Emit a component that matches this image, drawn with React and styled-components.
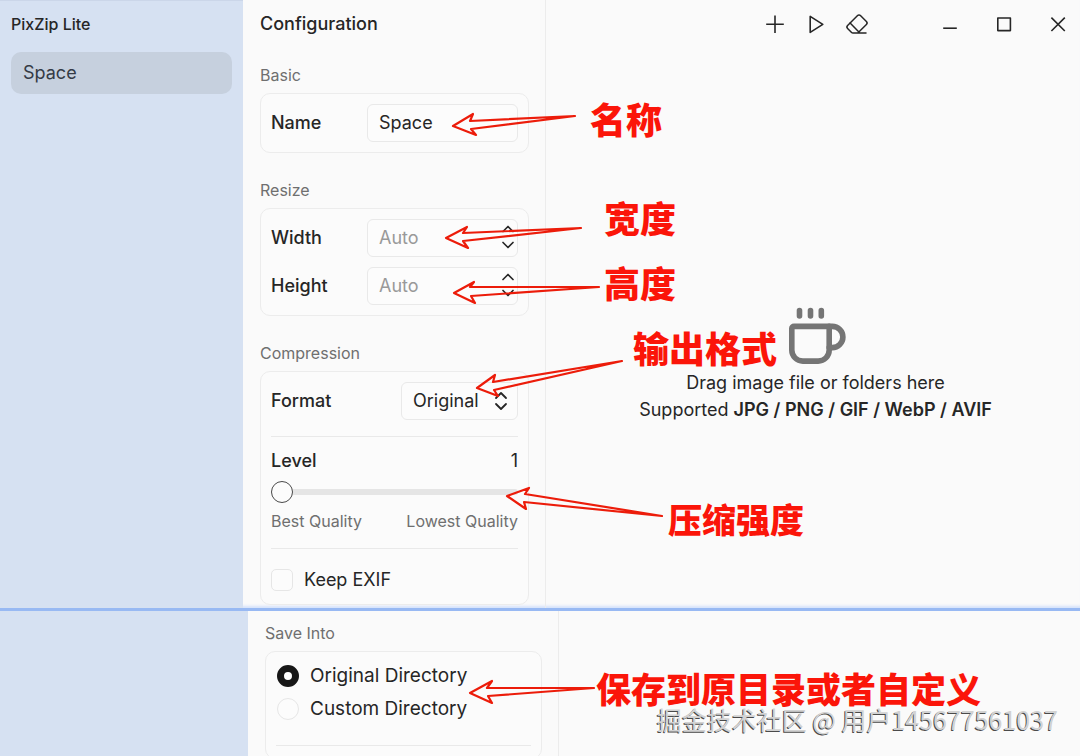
import React, { useState } from "react";
import styled, { createGlobalStyle } from "styled-components";
import { ChevronDown, ChevronUp, Eraser } from "lucide-react";

const GlobalStyle = createGlobalStyle`
    * {
        box-sizing: border-box;
    }

    body {
        margin: 0;
        background: #fafafa;
        color: #262626;
        font-family: Inter, "Noto Sans CJK SC", sans-serif;
        font-size: 18px;
        line-height: 24px;
    }

    button, input, select {
        font: inherit;
        color: inherit;
    }
`;

const Page = styled.div`
    position: relative;
    display: flex;
    flex-direction: column;
    height: 100vh;
    overflow: hidden;
`;

const WindowPane = styled.section`
    display: flex;
    flex: ${props => (props.$last ? "1 1 0" : "none")};
    min-height: 0;
    border-bottom: ${props => (props.$last ? "none" : "3px solid #98b9f3")};
    box-shadow: ${props => (props.$last ? "none" : "inset 0 -4px 3px -2px #d3e1fb")};
`;

const Sidebar = styled.aside`
    flex: none;
    width: ${props => (props.$wide ? 248 : 243)}px;
    padding: 0 11px;
    background: #d6e1f2;
    border-top: ${props => (props.$wide ? "none" : "1px solid #cbd6e9")};
`;

const AppName = styled.h1`
    margin: 0;
    padding: 11px 0 16px;
    font-size: 16px;
    font-weight: 500;
    line-height: 24px;
`;

const SpaceItem = styled.button`
    display: block;
    width: 100%;
    height: 42px;
    padding: 0 12px;
    border: 0;
    border-radius: 10px;
    background: #c6d0de;
    color: #343b46;
    text-align: left;
`;

const ConfigPanel = styled.div`
    flex: none;
    width: ${props => (props.$wide ? 311 : 303)}px;
    padding: 0 16px 3px 17px;
    border-right: 1px solid #ececec;
`;

const PanelTitle = styled.h2`
    margin: 0 0 17px;
    padding: 12px 0;
    font-size: 18px;
    font-weight: 500;
    line-height: 24px;
`;

const Group = styled.section`
    margin-bottom: ${props => (props.$last ? 0 : 27)}px;
    padding-top: ${props => (props.$spaced ? 12 : 0)}px;
`;

const GroupTitle = styled.h3`
    margin: 0 0 8px;
    color: #6f6f6f;
    font-size: 16px;
    font-weight: 400;
    line-height: 20px;
`;

const Card = styled.div`
    display: flex;
    flex-direction: column;
    gap: 10px;
    padding: 10px;
    border: 1px solid #ececec;
    border-radius: 10px;
    background: #fbfbfb;
`;

const Row = styled.div`
    display: flex;
    align-items: center;
    justify-content: space-between;
`;

const RowLabel = styled.label`
    font-weight: 500;
`;

const Field = styled.div`
    display: flex;
    width: 151px;
    height: 38px;
    border: 1px solid #e9e9e9;
    border-radius: 6px;
    background: #fcfcfc;
`;

const FieldInput = styled.input`
    flex: 1;
    min-width: 0;
    padding: 0 11px;
    border: 0;
    outline: 0;
    background: transparent;
    appearance: textfield;

    &::placeholder {
        color: #999;
        opacity: 1;
    }

    &::-webkit-inner-spin-button {
        appearance: none;
        margin: 0;
    }
`;

const Stepper = styled.div`
    display: flex;
    flex-direction: column;
    width: 18px;
    padding: 1px 0 3px;
`;

const StepButton = styled.button`
    display: flex;
    flex: 1;
    align-items: center;
    justify-content: center;
    min-height: 0;
    padding: 0;
    border: 0;
    background: transparent;

    svg {
        flex: none;
    }
`;

const SelectBox = styled.div`
    position: relative;
    width: 117px;
    height: 38px;
`;

const FormatSelect = styled.select`
    width: 100%;
    height: 100%;
    padding: 0 11px;
    border: 1px solid #e9e9e9;
    border-radius: 6px;
    background: #fcfcfc;
    appearance: none;
`;

const SelectArrows = styled.svg`
    position: absolute;
    top: 9px;
    right: 10px;
    pointer-events: none;
`;

const Divider = styled.hr`
    width: 100%;
    margin: 6px 0 2px;
    border: 0;
    border-top: 1px solid #e9e9e9;
`;

const LevelControl = styled.div`
    display: flex;
    flex-direction: column;
    gap: 8px;
    padding-bottom: 1px;
`;

const Slider = styled.input`
    width: 100%;
    height: 22px;
    margin: 0;
    appearance: none;
    background: transparent;

    &::-webkit-slider-runnable-track {
        height: 6px;
        border-radius: 3px;
        background: #e5e5e5;
    }

    &::-webkit-slider-thumb {
        width: 22px;
        height: 22px;
        margin-top: -8px;
        border: 1px solid #4a4a4a;
        border-radius: 50%;
        background: #fcfcfc;
        appearance: none;
    }
`;

const Scale = styled.div`
    display: flex;
    justify-content: space-between;
    color: #6f6f6f;
    font-size: 16px;
    line-height: 20px;
`;

const CheckLabel = styled.label`
    display: flex;
    align-items: center;
    gap: 11px;
    padding: ${props => (props.$padded ? "7px 0 2px" : "0")};
`;

const CheckBox = styled.input`
    width: 22px;
    height: 22px;
    margin: 0;
    border: 1px solid #e6e6e6;
    border-radius: 5px;
    background: #fcfcfc;
    appearance: none;

    &:checked {
        background: #171717;
    }
`;

const RadioList = styled.div`
    display: flex;
    flex-direction: column;
    gap: 9px;
    padding: 2px 1px 8px;
    font-size: 19px;
`;

const Radio = styled(CheckBox)`
    border-radius: 50%;

    &:checked {
        border: 7px solid #171717;
        background: #fff;
    }
`;

const Main = styled.main`
    display: flex;
    flex: 1;
    flex-direction: column;
    min-width: 0;
`;

const TitleBar = styled.header`
    display: flex;
    align-items: center;
    justify-content: flex-end;
    gap: 61px;
    height: 48px;
    padding-right: 6px;
`;

const ButtonSet = styled.div`
    display: flex;
    gap: ${props => props.$gap}px;
`;

const IconButton = styled.button`
    display: flex;
    align-items: center;
    justify-content: center;
    width: 32px;
    height: 32px;
    padding: 0;
    border: 0;
    background: transparent;
    color: #262626;
`;

const DropArea = styled.div`
    display: flex;
    flex: 1;
    flex-direction: column;
    align-items: center;
    padding: 259px 0 0 5px;
    text-align: center;
    line-height: 27px;
`;

const DropText = styled.p`
    margin: 0;

    &:first-of-type {
        margin-top: 5px;
    }
`;

const Formats = styled.strong`
    font-weight: 600;
`;

const Arrows = styled.svg`
    position: absolute;
    top: 0;
    left: 0;
    pointer-events: none;
`;

const Note = styled.span`
    position: absolute;
    top: ${props => props.$top}px;
    left: ${props => props.$left}px;
    color: #fb1509;
    font-family: "Noto Sans CJK SC", sans-serif;
    font-size: ${props => props.$size || 36}px;
    font-weight: 900;
    line-height: 36px;
    white-space: nowrap;
    pointer-events: none;
`;

const Watermark = styled.span`
    position: absolute;
    right: 22px;
    bottom: 19px;
    color: #d2d2d2;
    font-family: "Noto Sans CJK SC", sans-serif;
    font-size: 25px;
    line-height: 36px;
    white-space: nowrap;
    text-shadow: -1px 1px 0 #4a4a4a;
    pointer-events: none;
`;

const notes = [
    { text: "名称", left: 590, top: 100 },
    { text: "宽度", left: 604, top: 199 },
    { text: "高度", left: 604, top: 264 },
    { text: "输出格式", left: 633, top: 329 },
    { text: "压缩强度", left: 668, top: 501, size: 34 },
    { text: "保存到原目录或者自定义", left: 596, top: 670, size: 35 },
];

// each arrow runs tip, upper barb, tail, lower barb
const arrows = [
    "M453 126 473 114 470 121 575 116 471 129 476 135Z",
    "M446 238 467 227 463 233 581 228 463 241 468 248Z",
    "M454 293 474 282 470 287 599 287 471 296 475 303Z",
    "M477 388 495 375 493 382 622 361 494 390 498 396Z",
    "M507 496 529 488 525 494 662 516 524 502 526 509Z",
    "M470 693 492 681 487 688 594 688 488 696 492 703Z",
];

function Glyph({ d }) {
    return (
        <svg width="24" height="24" viewBox="0 0 24 24" fill="none" stroke="currentColor" strokeWidth="1.6" strokeLinejoin="round">
            <path d={d} />
        </svg>
    );
}

function CupIcon() {
    return (
        <svg width="61" height="57" viewBox="-4 0 61 57" fill="none" stroke="#757575" strokeWidth="5.6" strokeLinecap="round" strokeLinejoin="round">
            <path d="M10.5 3.5v5.5M21.5 3.5v5.5M32.3 3.5v5.5" />
            <path d="M5 19.4h35.2v23.7a11 11 0 0 1-11 11H13.8a11 11 0 0 1-11-11V21.6A2.2 2.2 0 0 1 5 19.4Z" />
            <path d="M40.2 19.4h3.1a10.6 10.6 0 0 1 0 21.2h-3.1" />
        </svg>
    );
}

function SizeField({ id, label }) {
    const [value, setValue] = useState("");
    const step = amount => setValue(String(Math.max(0, Number(value) + amount)));

    return (
        <Row>
            <RowLabel htmlFor={id}>{label}</RowLabel>
            <Field>
                <FieldInput id={id} type="number" placeholder="Auto" value={value} onChange={e => setValue(e.target.value)} />
                <Stepper>
                    <StepButton type="button" aria-label={`Increase ${label}`} onClick={() => step(1)}>
                        <ChevronUp size={20} strokeWidth={2} />
                    </StepButton>
                    <StepButton type="button" aria-label={`Decrease ${label}`} onClick={() => step(-1)}>
                        <ChevronDown size={20} strokeWidth={2} />
                    </StepButton>
                </Stepper>
            </Field>
        </Row>
    );
}

function Configuration() {
    const [name, setName] = useState("Space");
    const [level, setLevel] = useState(1);
    const [exif, setExif] = useState(false);

    return (
        <ConfigPanel>
            <PanelTitle>Configuration</PanelTitle>
            <Group>
                <GroupTitle>Basic</GroupTitle>
                <Card>
                    <Row>
                        <RowLabel htmlFor="name">Name</RowLabel>
                        <Field>
                            <FieldInput id="name" type="text" value={name} onChange={e => setName(e.target.value)} />
                        </Field>
                    </Row>
                </Card>
            </Group>
            <Group>
                <GroupTitle>Resize</GroupTitle>
                <Card>
                    <SizeField id="width" label="Width" />
                    <SizeField id="height" label="Height" />
                </Card>
            </Group>
            <Group $last>
                <GroupTitle>Compression</GroupTitle>
                <Card>
                    <Row>
                        <RowLabel htmlFor="format">Format</RowLabel>
                        <SelectBox>
                            <FormatSelect id="format" defaultValue="Original">
                                <option>Original</option>
                                <option>JPG</option>
                                <option>PNG</option>
                                <option>WebP</option>
                                <option>AVIF</option>
                            </FormatSelect>
                            <SelectArrows width="14" height="20" viewBox="0 0 14 20" fill="none" stroke="currentColor" strokeWidth="1.8" strokeLinecap="round" strokeLinejoin="round">
                                <path d="m2 7 5-5 5 5M2 13l5 5 5-5" />
                            </SelectArrows>
                        </SelectBox>
                    </Row>
                    <Divider />
                    <LevelControl>
                        <Row>
                            <RowLabel htmlFor="level">Level</RowLabel>
                            <output htmlFor="level">{level}</output>
                        </Row>
                        <Slider id="level" type="range" min="1" max="6" value={level} onChange={e => setLevel(e.target.value)} />
                        <Scale>
                            <span>Best Quality</span>
                            <span>Lowest Quality</span>
                        </Scale>
                    </LevelControl>
                    <Divider />
                    <CheckLabel $padded>
                        <CheckBox type="checkbox" checked={exif} onChange={e => setExif(e.target.checked)} />
                        Keep EXIF
                    </CheckLabel>
                </Card>
            </Group>
        </ConfigPanel>
    );
}

function SaveInto() {
    const [target, setTarget] = useState("Original Directory");

    return (
        <ConfigPanel $wide>
            <Group $last $spaced>
                <GroupTitle>Save Into</GroupTitle>
                <Card>
                    <RadioList>
                        {["Original Directory", "Custom Directory"].map(item => (
                            <CheckLabel key={item}>
                                <Radio type="radio" name="target" checked={target === item} onChange={() => setTarget(item)} />
                                {item}
                            </CheckLabel>
                        ))}
                    </RadioList>
                    <Divider />
                </Card>
            </Group>
        </ConfigPanel>
    );
}

export default function App() {
    return (
        <Page>
            <GlobalStyle />
            <WindowPane>
                <Sidebar>
                    <AppName>PixZip Lite</AppName>
                    <SpaceItem type="button">Space</SpaceItem>
                </Sidebar>
                <Configuration />
                <Main>
                    <TitleBar>
                        <ButtonSet $gap={9}>
                            <IconButton type="button" aria-label="Add">
                                <Glyph d="M12 3.5v17.5M3.2 12.2h17.6" />
                            </IconButton>
                            <IconButton type="button" aria-label="Run">
                                <Glyph d="M6.2 4.4v16l12.6-8Z" />
                            </IconButton>
                            <IconButton type="button" aria-label="Clear">
                                <Eraser size={24} strokeWidth={1.5} />
                            </IconButton>
                        </ButtonSet>
                        <ButtonSet $gap={22}>
                            <IconButton type="button" aria-label="Minimize">
                                <Glyph d="M5.2 16.2h13.6" />
                            </IconButton>
                            <IconButton type="button" aria-label="Maximize">
                                <Glyph d="M5.8 6h12.6v12.6H5.8Z" />
                            </IconButton>
                            <IconButton type="button" aria-label="Close">
                                <Glyph d="m5.4 5.6 13.4 13.4M18.8 5.6 5.4 19" />
                            </IconButton>
                        </ButtonSet>
                    </TitleBar>
                    <DropArea>
                        <CupIcon />
                        <DropText>Drag image file or folders here</DropText>
                        <DropText>
                            Supported <Formats>JPG / PNG / GIF / WebP / AVIF</Formats>
                        </DropText>
                    </DropArea>
                </Main>
            </WindowPane>
            <WindowPane $last>
                <Sidebar $wide />
                <SaveInto />
                <Main />
            </WindowPane>
            <Arrows width="1080" height="756" viewBox="0 0 1080 756" fill="none" stroke="#ec1c0a" strokeWidth="2.2" strokeLinejoin="round">
                {arrows.map(d => (
                    <path key={d} d={d} />
                ))}
            </Arrows>
            {notes.map(note => (
                <Note key={note.text} $left={note.left} $top={note.top} $size={note.size}>
                    {note.text}
                </Note>
            ))}
            <Watermark>掘金技术社区 @ 用户145677561037</Watermark>
        </Page>
    );
}
